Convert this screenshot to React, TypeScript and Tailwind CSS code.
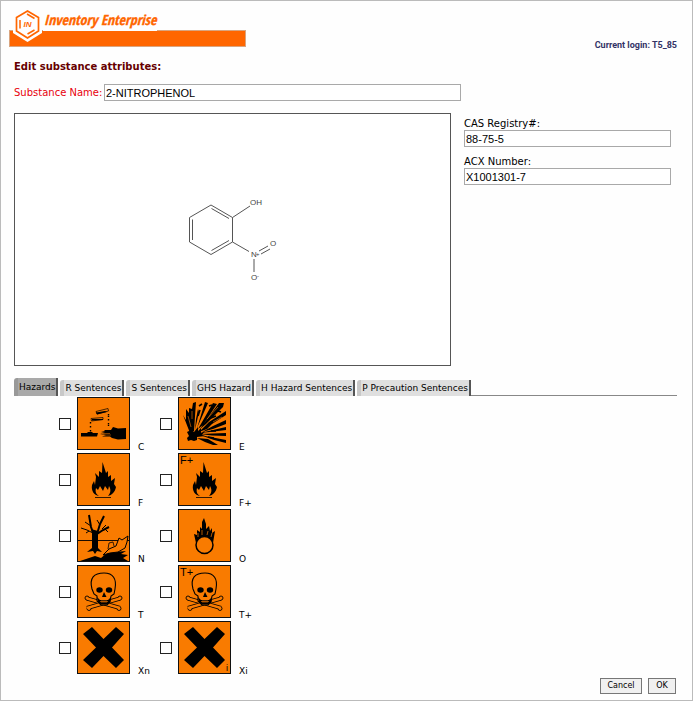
import type { ReactNode } from "react";

function Logo() {
  return (
    <svg viewBox="0 0 238 39" className="block h-[39px] w-[238px]" role="img" aria-label="Inventory Enterprise">
      <rect x="0.500" y="21.500" width="236" height="16" fill="#ff6600" stroke="#d9a580" />
      <rect x="34" y="0" width="114" height="22" fill="#fefefe" />
      <path d="M18.500 -1 L33 7 V24 L18.500 33 L4 24 V7 Z" fill="#fefefe" />
      <path d="M18.500 2 L29.500 8.500 V22 L18.500 29 L7.500 22 V8.500 Z" fill="none" stroke="#ff6600" strokeWidth="1.700" />
      <path d="M18 5 L25.500 9.500 M11 11 V19.500 M18.500 25 L25.500 21" fill="none" stroke="#ff6600" strokeWidth="1.500" />
      <text x="14.500" y="18" fontFamily="'Liberation Sans', Arial, sans-serif" fontSize="8" fontWeight="700" fontStyle="italic" fill="#ff6600">IN</text>
      <text x="35" y="16" fontFamily="'Liberation Sans Narrow', 'Arial Narrow', 'Open Sans Condensed', 'Liberation Sans', sans-serif" fontSize="14" fontWeight="700" fontStyle="italic" fill="#ff6600" stroke="#ff6600" strokeWidth="0.300">Inventory Enterprise</text>
    </svg>
  );
}

function Molecule() {
  return (
    <svg viewBox="0 0 96 90" className="h-[90px] w-[96px]" role="img" aria-label="2-nitrophenol structure">
      <g fill="none" stroke="#555" strokeWidth="1">
        <path d="M26 10 L47.500 22.500 V47 L26 59.500 L4.500 47 V22.500 Z" />
        <path d="M26.500 13.500 L44 23.500 M26.500 55.500 L44 45.500 M7.500 45 V24.500" />
        <path d="M47.500 22.500 L65 11 M47.500 47 L64 56.500 M69 64 V77 M76 59 L85 54 M74 56 L83 51" />
      </g>
      <g fill="#444" fontFamily="'Liberation Sans', Arial, sans-serif" fontSize="8">
        <text x="65" y="10">OH</text>
        <text x="66" y="62">N</text>
        <text x="71" y="61" fontSize="6">+</text>
        <text x="85" y="51">O</text>
        <text x="66" y="85">O</text>
        <text x="72" y="83" fontSize="6">-</text>
      </g>
    </svg>
  );
}

function Corrosive() {
  return (
    <>
      <path d="M19 14.500 L31 11.500 L31.500 14 L20 17 Z M14 21.500 L26 20.500 V22.500 L14.500 24 Z" fill="none" stroke="#000" strokeWidth="0.700" />
      <path d="M19 15.500 L28 14 L30 15 L20 17.500 Z M15 22 L26 22 L26 23 L15 23.500 Z" />
      <path d="M31.500 17 V20 M31.500 22 V24 M31.500 26 V29 M13.500 25 V27 M13.500 29 V31 M13.500 33 V36" stroke="#000" strokeWidth="1.400" strokeDasharray="1.500 0.500" />
      <path d="M4 36 H10 L11 35 H15 L16 36 H21 L20 39.500 H4 Z" />
      <path d="M24 35 L28 34 L27 33 L34 33 L36 30 L41 31.500 L49 31 V42 L41 42.500 L35 41 L33 39.500 L25 39.500 L29 38 L23 37 L28 36 Z" />
      <path d="M25 36.500 H33 M26 38 H34" stroke="#f97b00" strokeWidth="0.500" />
    </>
  );
}

function Explosive() {
  return (
    <>
      <path d="M12 36 L5 18 L8 23 L8 12 L11 16 L11 11 L14 12 L15 6 L18 5 L16 34 Z" />
      <path d="M17 33 L18 22 L20 12 L21 15 Z M19 31 L27 5 L30 6 L23 22 Z M20 32 L35 6 L39 7 L25 28 Z M22 32 L41 6 H46 L45 10 L28 27 Z" />
      <path d="M21 35 L31 25 L48 14 V18 L34 27 L29 32 Z M24 35 L35 29 L48 23 V27 L35 32 Z M22 36 L48 30 V33 L32 35 Z M22 37 L48 36 V39 L34 38.500 Z M22 38 L48 43 V46 L36 43 Z M19 41 L30 42 L40 48 H35 L27 45 Z" />
      <path d="M9 35 L13 33 L16 35 L20 30 L20 34 L23 31 L23 36 L27 34 L24 38 L27 39 L19 40 L19 43 L16 44 L13 43 L10 44 L9 41 L11 39 Z" />
      <path d="M21 9 L24 7 M22 13 L20 19 M31 9 L34 8 M33 21 L38 19 M33 34 L38 34 M30 40 L36 41 M40 14 L43 15" stroke="#000" strokeWidth="1.600" />
      <path d="M10 19 L13 30 M14 14 V22 M40 10 L29 22 M44 20 L35 25" stroke="#f97b00" strokeWidth="0.600" />
    </>
  );
}

function Flame() {
  return (
    <>
      <path d="M25.500 9 L29 20 L31 18 L31 24 L34 22 L34 28 L38 25 L37 31 L39 34 C38 39 35 42 31 43 C34 40 34 36 32 33 L31 37 L28 33 L26 38 L23 33 L21 37 L19 35 C18 39 19 41 22 43 C17 42 14 38 15 32 L17 28 L18 32 L19 24 L18 20 L22 24 L22 18 L25 20 Z" />
      <path d="M18 44.500 H34" stroke="#000" strokeWidth="0.800" />
    </>
  );
}

function Environment() {
  return (
    <>
      <path d="M1 31.500 H52" stroke="#000" strokeWidth="0.900" />
      <path d="M14 20 L15 24 V39 L10 43 L16 42 L18 45 L20 42 L25 43 L21 39 V22 Z" />
      <g fill="none" stroke="#000">
        <path d="M17 26 L14 18 L12 6 M20 25 L23 15 L27 7 M20 25 L26 21 L32 18" strokeWidth="2" />
        <path d="M16 24 L10 21 L4 19 M14 17 L8 13 M12 22 L9 24 M23 16 L20 11 M25 20 L29 16 M28 20 L31 23" strokeWidth="1" />
      </g>
      <path d="M3 52 L12 49 L18 47 L24 49 L31 43 L38 43 L49 42 L44 45 L51 46 L46 49 L51 52 Z" />
      <path d="M26 46 L32 40 L39 37 L42 29 L45 31 L51 27 L50 33 L48 39 L41 43 L33 44 Z" fill="#f97b00" stroke="#000" strokeWidth="1" />
      <path d="M31 40 L32 34 L36 33 L37 37" fill="none" stroke="#000" strokeWidth="0.800" />
    </>
  );
}

function Oxidizing() {
  return (
    <>
      <path d="M26 9 L28 15 L28 20 L31 17 L32 22 L34 19 L34 24 L37 22 L36 28 L35 34 L31 29 L27 28 L22 29 L18 34 L16 25 L19 26 L19 21 L22 23 L22 18 L24 20 L24 13 Z" />
      <path d="M20 28 L20 24 M24 26 L24 21 M29 26 L30 22 M33 28 L34 24" stroke="#f97b00" strokeWidth="0.700" />
      <circle cx="26.500" cy="36" r="8.500" fill="#f97b00" stroke="#000" strokeWidth="1.500" />
    </>
  );
}

function Skull() {
  return (
    <>
      <path d="M10 33.500 L43 43 M10 43 L43 33.500" stroke="#000" strokeWidth="4" />
      <g fill="#f97b00" stroke="#000" strokeWidth="0.900">
        <circle cx="10" cy="33" r="2" /><circle cx="43" cy="33" r="2" />
        <circle cx="12" cy="43.500" r="2" /><circle cx="42" cy="43.500" r="2" />
      </g>
      <path d="M10 33.500 L43 43 M10 43 L43 33.500" stroke="#f97b00" strokeWidth="2.400" />
      <path d="M15 24 C12 13 17 8 27 8 C36 8 40 14 38 24 L37 29 L34 31 L33 37 L30 40 H24 L20 36 L20 31 L17 29 Z" fill="#f97b00" stroke="#000" strokeWidth="1.100" />
      <ellipse cx="22.500" cy="25" rx="3.200" ry="2.800" /><ellipse cx="32" cy="25" rx="3.200" ry="2.800" />
      <path d="M27 27 L29.500 32 H25 Z M20 32 L23 35 H31 L34 32 L33 37 L30 39.500 H24 L21 37 Z" />
      <path d="M23 36.500 H31 M25 34 V38 M27 34 V38 M29 34 V38" stroke="#f97b00" strokeWidth="0.600" />
    </>
  );
}

function Cross() {
  return <path d="M6 13 L15 6 L26.500 18 L39 6 L47 13 L35 26.500 L47 39 L39 47 L26.500 35 L15 47 L6 39 L19 26.500 Z" />;
}

const hazards: { code: string; art: ReactNode; mark?: string; corner?: string }[] = [
  { code: "C", art: <Corrosive /> },
  { code: "E", art: <Explosive /> },
  { code: "F", art: <Flame /> },
  { code: "F+", art: <Flame />, mark: "F+" },
  { code: "N", art: <Environment /> },
  { code: "O", art: <Oxidizing /> },
  { code: "T", art: <Skull /> },
  { code: "T+", art: <Skull />, mark: "T+" },
  { code: "Xn", art: <Cross /> },
  { code: "Xi", art: <Cross />, corner: "i" },
];

const tabs = ["Hazards", "R Sentences", "S Sentences", "GHS Hazard", "H Hazard Sentences", "P Precaution Sentences"];

const inputStyle =
  "h-[17px] border border-[#a9a9a9] bg-white px-px font-['Liberation_Sans',Arial,sans-serif] text-[11px] leading-[15px] text-black outline-none";
const buttonStyle =
  "h-4 border border-[#777] bg-[#f0f0f0] text-[8px] leading-[14px] font-['DejaVu_Sans',Verdana,sans-serif] text-black";

export default function App() {
  return (
    <div className="flex min-h-screen flex-col border border-[#bbb] bg-[#fefefe] font-['DejaVu_Sans',Verdana,sans-serif] text-[10px] leading-3 text-black">
      <header className="flex items-end justify-between pt-2 pr-[15px] pl-2">
        <Logo />
        <p className="font-['Roboto',Arial,sans-serif] text-[9px] leading-[6px] font-bold text-[#333366]">
          Current login: T5_85
        </p>
      </header>

      <main className="flex flex-1 flex-col px-[13px] pt-[13px]">
        <h1 className="font-bold text-[#660000]">Edit substance attributes:</h1>

        <div className="mt-[11px] flex items-center">
          <label htmlFor="name" className="w-[90px] text-[#e8000c]">Substance Name:</label>
          <input id="name" className={`${inputStyle} w-[357px]`} defaultValue="2-NITROPHENOL" />
        </div>

        <div className="mt-3 flex gap-[13px]">
          <div className="flex h-[253px] w-[437px] items-center justify-center border border-[#555] bg-white">
            <Molecule />
          </div>
          <div className="mr-2 flex flex-1 flex-col gap-[9px] pt-[5px]">
            <div className="flex flex-col">
              <label htmlFor="cas">CAS Registry#:</label>
              <input id="cas" className={inputStyle} defaultValue="88-75-5" />
            </div>
            <div className="flex flex-col">
              <label htmlFor="acx">ACX Number:</label>
              <input id="acx" className={inputStyle} defaultValue="X1001301-7" />
            </div>
          </div>
        </div>

        <div className="mt-3 mr-0.5 flex items-end">
          <nav className="flex items-end gap-0.5 text-[9px]">
            {tabs.map((tab, i) => (
              <button
                key={tab}
                className={`rounded-tl-[3px] border-r-2 border-l-4 border-r-[#555] px-px whitespace-nowrap ${
                  i === 0 ? "h-[18px] border-l-[#999] bg-[#a9a9a9]" : "h-4 border-l-[#c8c8c8] bg-[#dfdfdf]"
                }`}
              >
                {tab}
              </button>
            ))}
          </nav>
          <div className="flex-1 border-b border-[#888]" />
        </div>

        <div className="mt-px ml-[45px] grid w-[202px] grid-cols-2 gap-y-[3px]">
          {hazards.map(({ code, art, mark, corner }) => (
            <label key={code} className="flex h-[53px] items-center">
              <input type="checkbox" className="h-3 w-3 appearance-none border border-[#222] bg-white checked:bg-[#222]" />
              <svg viewBox="0 0 53 53" className="ml-1.5 h-[53px] w-[53px]" aria-hidden="true">
                <rect x="0.500" y="0.500" width="52" height="52" fill="#f97b00" stroke="#111" />
                {art}
                {mark && <text x="2" y="11" fontFamily="'Liberation Sans', Arial, sans-serif" fontSize="11">{mark}</text>}
                {corner && <text x="48" y="50" fontFamily="'Liberation Sans', Arial, sans-serif" fontSize="9">{corner}</text>}
              </svg>
              <span className="ml-2 self-end text-[9px] leading-[6px]">{code}</span>
            </label>
          ))}
        </div>

        <footer className="mt-auto flex justify-end gap-1.5 pt-1 pr-[3px] pb-1.5">
          <button className={`${buttonStyle} w-[42px]`}>Cancel</button>
          <button className={`${buttonStyle} w-7`}>OK</button>
        </footer>
      </main>
    </div>
  );
}
